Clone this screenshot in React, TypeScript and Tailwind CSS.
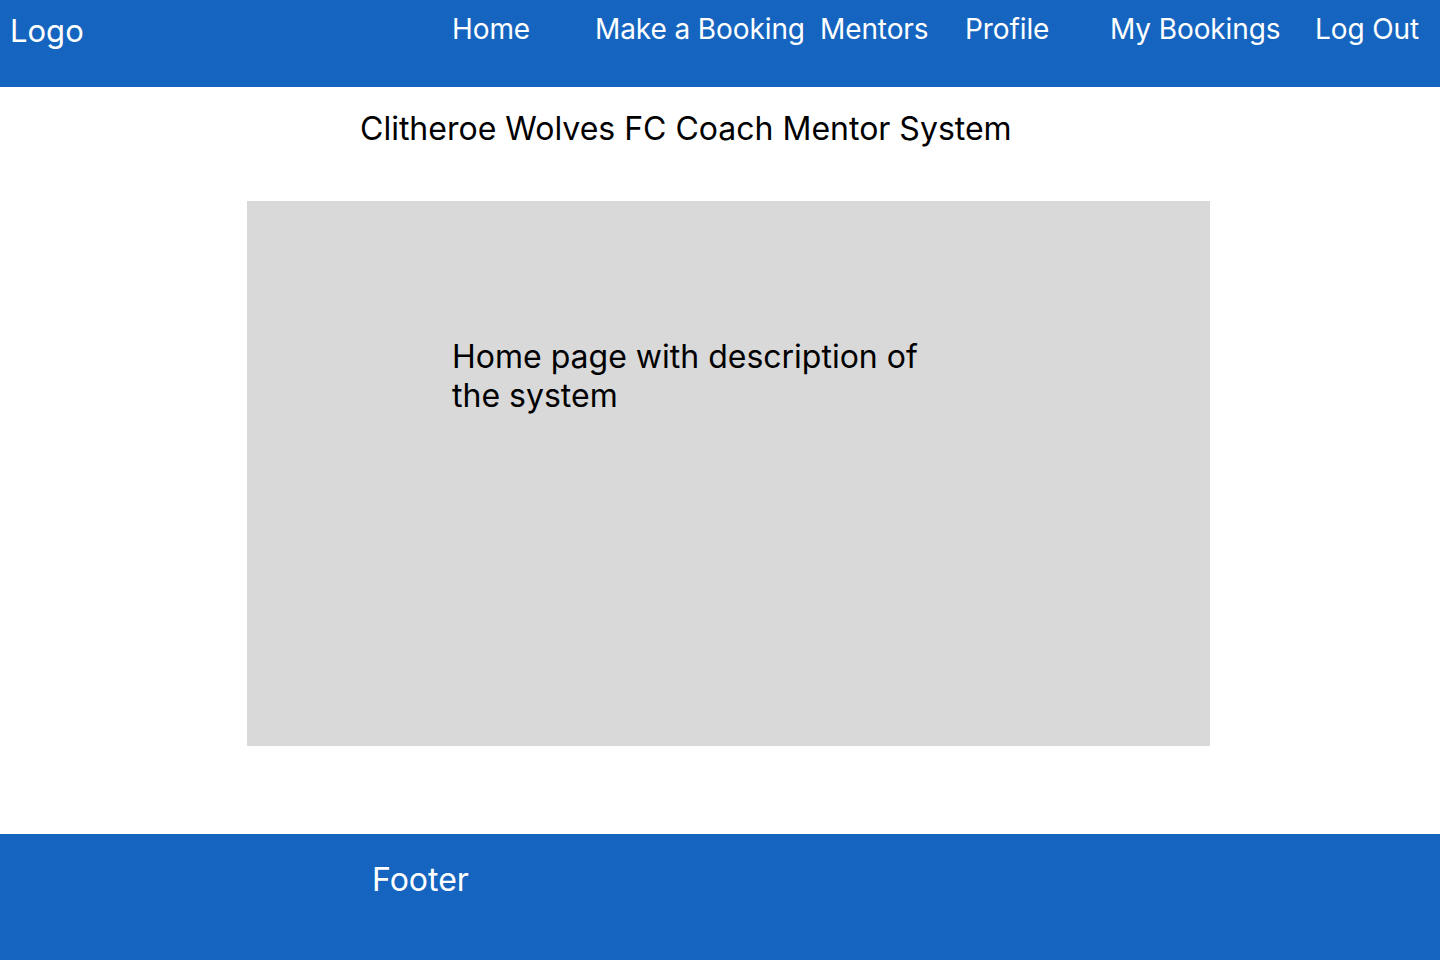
const navItems = [
  { label: "Home", width: "w-[143px]" },
  { label: "Make a Booking", width: "w-[225px]" },
  { label: "Mentors", width: "w-[145px]" },
  { label: "Profile", width: "w-[145px]" },
  { label: "My Bookings", width: "w-[205px]" },
  { label: "Log Out", width: "w-[125px]" },
];

function App() {
  return (
    <div className="min-h-[960px] flex flex-col bg-white font-['Inter',sans-serif]">
      <header className="h-[87px] bg-[#1565C0] flex items-start text-white">
        <div className="pl-[10px] pt-[11px] text-[31px] leading-[40px] flex-1">Logo</div>
        <nav className="flex pt-[9px]">
          {navItems.map((item) => (
            <a key={item.label} href="#" className={`${item.width} text-[28px] leading-[40px] tracking-[-0.1px] whitespace-nowrap`}>
              {item.label}
            </a>
          ))}
        </nav>
      </header>

      <main className="flex-1">
        <h1 className="pl-[360px] pt-[22px] text-[32px] leading-[40px] text-black">
          Clitheroe Wolves FC Coach Mentor System
        </h1>
        <section className="ml-[247px] mt-[52px] w-[963px] h-[545px] bg-[#D9D9D9] pl-[205px] pt-[136px]">
          <p className="w-[500px] text-[32px] leading-[39px] text-black">
            Home page with description of the system
          </p>
        </section>
      </main>

      <footer className="h-[126px] bg-[#1565C0] text-white pl-[372px] pt-[26px]">
        <div className="text-[32px] leading-[40px]">Footer</div>
      </footer>
    </div>
  );
}

export default App;
